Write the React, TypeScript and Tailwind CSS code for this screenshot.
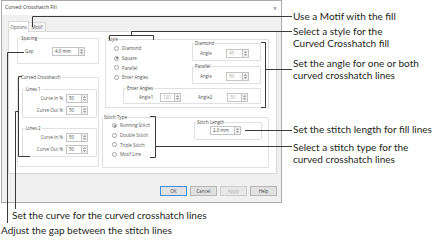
import React from "react";

function Spin() {
  return (
    <div className="w-[6px] h-full border border-l-0 border-[#c4c4c4] bg-[#efefef] flex flex-col items-center justify-center gap-[1px]">
      <svg width="3" height="2" viewBox="0 0 3 2"><path d="M0 2 L1.5 0 L3 2Z" fill="#999999" /></svg>
      <svg width="3" height="2" viewBox="0 0 3 2"><path d="M0 0 L1.5 2 L3 0Z" fill="#999999" /></svg>
    </div>
  );
}

function Field({ value, w, disabled }: { value: string; w: string; disabled?: boolean }) {
  return (
    <div className="flex h-[9px]">
      <div
        className={`${w} h-full border border-[#c4c4c4] bg-white flex items-center pl-[2px] ${
          disabled ? "text-[#a8a8a8]" : "text-[#444]"
        }`}
      >
        {value}
      </div>
      <Spin />
    </div>
  );
}

function Radio({ label, checked, h }: { label: string; checked?: boolean; h: string }) {
  return (
    <div className={`flex items-center gap-[3px] ${h}`}>
      <div className="w-[5px] h-[5px] rounded-full border border-[#a5a5a5] bg-white flex items-center justify-center">
        {checked && <div className="w-[2px] h-[2px] rounded-full bg-[#777]" />}
      </div>
      <span>{label}</span>
    </div>
  );
}

function Group({
  label,
  className,
  legendClass,
  children,
}: {
  label: string;
  className: string;
  legendClass?: string;
  children?: React.ReactNode;
}) {
  return (
    <fieldset className={`border border-[#e0e0e0] rounded-[1px] ${className}`}>
      <legend className={`px-[1px] leading-[6px] text-[#444] ${legendClass ?? "ml-[2px]"}`}>{label}</legend>
      {children}
    </fieldset>
  );
}

function CurveRow({ label, mt }: { label: string; mt: string }) {
  return (
    <div className={`flex items-center h-[10px] ${mt}`}>
      <div className="w-[40px] text-right">{label}</div>
      <div className="ml-[3px]">
        <Field value="50" w="w-[16px]" />
      </div>
    </div>
  );
}

function Btn({ label, primary, disabled }: { label: string; primary?: boolean; disabled?: boolean }) {
  return (
    <div
      className={`w-[27px] h-[10px] flex items-center justify-center border ${
        primary ? "border-[#3c8fd8] bg-[#e1e1e1]" : "border-[#b5b5b5] bg-[#e1e1e1]"
      } ${disabled ? "text-[#b0b0b0] border-[#cccccc] bg-[#e8e8e8]" : "text-[#444]"}`}
    >
      {label}
    </div>
  );
}

function Dialog() {
  return (
    <div className="ml-[1px] w-[281px] h-[203px] border border-[#ababab] bg-[#f0f0f0] flex flex-col font-['Open_Sans',sans-serif] text-[4.5px] text-[#555]">
      {/* title bar */}
      <div className="h-[14px] bg-white flex items-center justify-between pl-[3px] pr-[4px]">
        <span className="text-[5px] text-[#333]">Curved Crosshatch Fill</span>
        <span className="text-[7px] leading-none text-[#666]">×</span>
      </div>
      {/* tabs */}
      <div className="mt-[6px] ml-[6px] flex items-end h-[10px]">
        <div className="w-[21px] h-[11px] mb-[-1px] bg-white border border-b-0 border-[#d9d9d9] flex items-center justify-center relative z-10">
          Options
        </div>
        <div className="w-[17px] h-[9px] bg-[#f4f4f4] border border-l-0 border-b-0 border-[#d9d9d9] flex items-center justify-center">
          Motif
        </div>
      </div>
      {/* panel */}
      <div className="ml-[6px] w-[269px] h-[143px] bg-white border border-[#d9d9d9] flex pl-[8px]">
        {/* left column */}
        <div className="w-[82px] flex flex-col">
          <Group label="Spacing" className="mt-[3px] h-[29px]">
            <div className="flex items-center h-[9px] mt-[6px] pl-[7px]">
              <span className="w-[27px]">Gap</span>
              <Field value="4.0 mm" w="w-[27px]" />
            </div>
          </Group>
          <Group label="Curved Crosshatch" className="mt-[10px] h-[93px]">
            <Group label="Lines 1" className="mt-[6px] ml-[4px] w-[75px] h-[32px]">
              <CurveRow label="Curve In %" mt="mt-[1px]" />
              <CurveRow label="Curve Out %" mt="mt-[2px]" />
            </Group>
            <Group label="Lines 2" className="mt-[7px] ml-[4px] w-[75px] h-[32px]">
              <CurveRow label="Curve In %" mt="mt-[1px]" />
              <CurveRow label="Curve Out %" mt="mt-[2px]" />
            </Group>
          </Group>
        </div>
        {/* right column */}
        <div className="flex flex-col ml-[3px]">
          <Group label="Style" className="ml-[3px] mt-[4px] w-[164px] h-[72px]" legendClass="ml-[1px]">
            <div className="flex">
              <div className="ml-[8px] mt-[1.5px] w-[78px] flex flex-col">
                <Radio label="Diamond" h="h-[9.8px]" />
                <Radio label="Square" checked h="h-[9.8px]" />
                <Radio label="Parallel" h="h-[9.8px]" />
                <Radio label="Enter Angles" h="h-[9.8px]" />
              </div>
              <div className="flex flex-col mt-[-2px]">
                <Group label="Diamond" className="w-[69px] h-[21px]" legendClass="ml-[1px]">
                  <div className="flex items-center h-[9px] mt-[2.5px] pl-[7px]">
                    <span className="w-[26px]">Angle</span>
                    <Field value="45" w="w-[17px]" disabled />
                  </div>
                </Group>
                <Group label="Parallel" className="mt-[2px] w-[69px] h-[21px]" legendClass="ml-[1px]">
                  <div className="flex items-center h-[9px] mt-[2.5px] pl-[7px]">
                    <span className="w-[26px]">Angle</span>
                    <Field value="90" w="w-[17px]" disabled />
                  </div>
                </Group>
              </div>
            </div>
            <Group label="Enter Angles" className="ml-[17px] mt-[1px] w-[138px] h-[19px]">
              <div className="flex items-center h-[9px] mt-[1.5px] pl-[15px]">
                <span className="w-[21px]">Angle1</span>
                <Field value="120" w="w-[15px]" disabled />
                <span className="ml-[17px] w-[29px]">Angle2</span>
                <Field value="30" w="w-[15px]" disabled />
              </div>
            </Group>
          </Group>
          <Group label="Stitch Type" className="mt-[6px] w-[167px] h-[54px]" legendClass="ml-0">
            <div className="flex">
              <div className="ml-[9px] mt-[1px] w-[82px] flex flex-col">
                <Radio label="Running Stitch" checked h="h-[9.6px]" />
                <Radio label="Double Stitch" h="h-[9.6px]" />
                <Radio label="Triple Stitch" h="h-[9.6px]" />
                <Radio label="Motif Line" h="h-[9.6px]" />
              </div>
              <Group label="Stitch Length" className="mt-[-1px] w-[68px] h-[21px]" legendClass="ml-[1px]">
                <div className="flex items-center h-[9px] mt-[1px] pl-[15px]">
                  <Field value="2.0 mm" w="w-[25px]" />
                </div>
              </Group>
            </div>
          </Group>
        </div>
      </div>
      {/* buttons */}
      <div className="mt-[12px] flex justify-end gap-[3px] pr-[4px]">
        <Btn label="OK" primary />
        <Btn label="Cancel" />
        <Btn label="Apply" disabled />
        <Btn label="Help" />
      </div>
    </div>
  );
}

export default function App() {
  const line = "#3a3a3a";
  return (
    <div className="relative w-[446px] h-[240px] bg-white overflow-hidden font-['Lato',sans-serif] text-[#231f20]">
      <div className="flex">
        <Dialog />
        <div className="ml-[11px] flex flex-col text-[10px] leading-[12px] whitespace-nowrap">
          <div className="mt-[10px]">Use a Motif with the fill</div>
          <div className="mt-[3px]">
            Select a style for the
            <br />
            Curved Crosshatch fill
          </div>
          <div className="mt-[8px]">
            Set the angle for one or both
            <br />
            curved crosshatch lines
          </div>
          <div className="mt-[42px]">Set the stitch length for fill lines</div>
          <div className="mt-[6px]">
            Select a stitch type for the
            <br />
            curved crosshatch lines
          </div>
        </div>
      </div>
      <div className="text-[10px] leading-[12px] whitespace-nowrap">
        <div className="mt-[6px] ml-[12px]">Set the curve for the curved crosshatch lines</div>
        <div className="mt-[3px] ml-[1px]">Adjust the gap between the stitch lines</div>
      </div>
      <svg className="absolute inset-0 pointer-events-none" width="446" height="240" viewBox="0 0 446 240">
        <g fill="none" stroke={line} strokeWidth="1">
          <path d="M32.5 27 V16.5 H292" />
          <path d="M109.5 40 V35.5 H153.5 V40" />
          <path d="M131.5 35.5 V31.5 H292" />
          <path d="M261 42.5 H265.5 V107.5 H261" />
          <path d="M265.5 69.5 H292" />
          <path d="M245 130.5 H292" />
          <path d="M150 116.5 H155.5 V157.5 H150" />
          <path d="M155.5 146.5 H292" />
          <path d="M22 76.5 H18.5 V156.5 H30" />
          <path d="M18.5 111.5 H15.5 V209" />
          <path d="M24 52.5 H7.5 V223" />
        </g>
      </svg>
    </div>
  );
}
